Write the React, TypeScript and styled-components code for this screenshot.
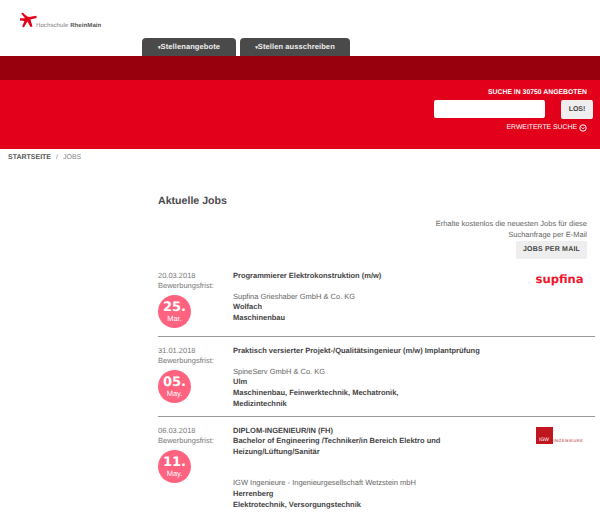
import React from 'react';
import styled, { createGlobalStyle } from 'styled-components';

const GlobalStyle = createGlobalStyle`
  html, body {
    margin: 0;
    padding: 0;
    background: #fff;
    overflow: hidden;
  }
  body {
    font-family: "Liberation Sans", Arial, sans-serif;
    color: #4a4a4a;
    text-rendering: geometricPrecision;
  }
`;

const Page = styled.div`
  width: 600px;
  height: 512px;
  overflow: hidden;
`;

const Header = styled.div`
  height: 56px;
  display: flex;
  flex-direction: column;
  justify-content: space-between;
`;

const LogoRow = styled.div`
  display: flex;
  align-items: flex-start;
  padding: 12px 0 0 20px;
`;

const LogoText = styled.span`
  font-size: 6px;
  color: #777;
  margin: 10px 0 0 -1px;
  line-height: 8px;
  letter-spacing: 0.1px;

  b {
    color: #555;
    font-weight: 700;
  }
`;

const Tabs = styled.div`
  display: flex;
  gap: 4px;
  padding-left: 142px;
`;

const Tab = styled.div<{ $width: number }>`
  width: ${({ $width }) => $width}px;
  height: 18px;
  background: #4a4a4a;
  border-radius: 4px 4px 0 0;
  color: #eee;
  font-size: 7.5px;
  font-weight: 700;
  line-height: 17px;
  text-align: center;
  letter-spacing: 0.1px;
`;

const TabArrow = styled.span`
  font-size: 5px;
`;

const DarkBand = styled.div`
  height: 24px;
  background: #99000d;
`;

const SearchBand = styled.div`
  height: 69px;
  background: #e2001a;
  display: flex;
  flex-direction: column;
  align-items: flex-end;
  padding: 8px 13px 0 0;
  box-sizing: border-box;
`;

const SearchTitle = styled.div`
  font-size: 6.85px;
  font-weight: 700;
  line-height: 9px;
  color: #fff;
`;

const SearchRow = styled.div`
  display: flex;
  gap: 16px;
  margin: 3px -6px 0 0;
`;

const SearchInput = styled.div`
  width: 111px;
  height: 18px;
  background: #fff;
  border-radius: 2px;
`;

const SearchButton = styled.div`
  width: 32px;
  height: 19px;
  background: #eeeeee;
  border-radius: 2px;
  color: #444;
  font-size: 7px;
  font-weight: 700;
  line-height: 19px;
  text-align: center;
`;

const AdvancedLink = styled.div`
  display: flex;
  align-items: center;
  gap: 2px;
  margin-top: 4px;
  font-size: 6.85px;
  line-height: 10px;
  color: #fff;
`;

const Breadcrumb = styled.div`
  padding: 4px 0 0 8px;
  font-size: 7px;
  line-height: 10px;
  color: #888;

  b {
    color: #555;
  }
`;

const Separator = styled.span`
  margin: 0 5px;
`;

const Main = styled.div`
  padding: 31px 5px 0 158px;
`;

const Title = styled.h1`
  margin: 0;
  font-size: 10.6px;
  line-height: 14px;
  font-weight: 700;
  color: #4a4a4a;
`;

const Alert = styled.div`
  display: flex;
  flex-direction: column;
  align-items: flex-end;
  margin: 11px 8px 3px 0;
  font-size: 7.5px;
  line-height: 10.6px;
  color: #666;
  text-align: right;
`;

const MailButton = styled.div`
  width: 71px;
  height: 18px;
  margin-top: 1px;
  background: #eeeeee;
  border-radius: 2px;
  color: #444;
  font-size: 7px;
  font-weight: 700;
  line-height: 18px;
  text-align: center;
  letter-spacing: 0.2px;
`;

const JobRow = styled.div<{ $height: number; $divider?: boolean }>`
  display: flex;
  height: ${({ $height }) => $height}px;
  box-sizing: border-box;
  padding-top: 8.5px;
  border-bottom: ${({ $divider }) => ($divider ? '1px solid #999' : 'none')};
`;

const DateColumn = styled.div`
  width: 75px;
  flex-shrink: 0;
  font-size: 7.5px;
  line-height: 10.6px;
  color: #777;
`;

const DateBadge = styled.div`
  width: 33px;
  height: 33px;
  margin-top: 3.5px;
  border-radius: 50%;
  background: #ff637f;
  color: #fff;
  display: flex;
  flex-direction: column;
  align-items: center;
  justify-content: center;
`;

const BadgeDay = styled.span`
  font-family: "DejaVu Sans", sans-serif;
  font-size: 13px;
  line-height: 13px;
  font-weight: 700;
`;

const BadgeMonth = styled.span`
  font-size: 7.5px;
  line-height: 9px;
`;

const JobBody = styled.div`
  flex: 1;
  min-width: 0;
  font-size: 7.5px;
  line-height: 10.6px;
  color: #666;
`;

const JobTitle = styled.div<{ $gap: number }>`
  font-weight: 700;
  color: #444;
  margin-bottom: ${({ $gap }) => $gap}px;
`;

const Strong = styled.div`
  font-weight: 700;
  color: #444;
`;

const LogoColumn = styled.div`
  width: 66px;
  flex-shrink: 0;
`;

const SupfinaLogo = styled.div`
  margin: 1px 0 0 6.5px;
  font-family: "DejaVu Sans", sans-serif;
  font-size: 11.6px;
  line-height: 14px;
  font-weight: 700;
  color: #f0142d;
`;

const IgwLogo = styled.div`
  display: flex;
  align-items: flex-end;
  gap: 1px;
  margin: 1.5px 0 0 6.5px;
`;

const IgwMark = styled.div`
  width: 17px;
  height: 17px;
  display: flex;
  align-items: flex-end;
  justify-content: center;
  background: #c0161f;
  color: #fff;
  font-size: 5px;
  line-height: 7px;
`;

const IgwName = styled.span`
  font-size: 4px;
  line-height: 6px;
  color: #b5121b;
  letter-spacing: 0.5px;
`;

const CircleIcon = () => (
  <svg width="8" height="8" viewBox="0 0 8 8" fill="none" stroke="#fff">
    <circle cx="4" cy="4" r="3.2" strokeWidth="1" />
    <path d="M2.6 3.4 4 4.8l1.4-1.4" strokeWidth="1" />
  </svg>
);

const Star = () => (
  <svg width="17" height="16" viewBox="0 0 17 16" fill="#e2001a">
    <path d="M2.5 0.5 7 4.2 9 5 16.5 3.8 16.5 6 10.5 7.6 12.5 14.5 10.5 15 7.5 9.5 3.8 15.5 2.2 14.5 4.4 9 0 8.6 0 6.2 5 6.2 1.2 1.6Z" />
  </svg>
);

const jobs = [
  {
    date: '20.03.2018',
    day: '25.',
    month: 'Mar.',
    title: ['Programmierer Elektrokonstruktion (m/w)'],
    gap: 10.6,
    company: 'Supfina Grieshaber GmbH & Co. KG',
    city: 'Wolfach',
    field: ['Maschinenbau'],
    logo: 'supfina',
    height: 75,
  },
  {
    date: '31.01.2018',
    day: '05.',
    month: 'May.',
    title: ['Praktisch versierter Projekt-/Qualitätsingenieur (m/w) Implantprüfung'],
    gap: 10.6,
    company: 'SpineServ GmbH & Co. KG',
    city: 'Ulm',
    field: ['Maschinenbau, Feinwerktechnik, Mechatronik,', 'Medizintechnik'],
    logo: '',
    height: 80,
  },
  {
    date: '06.03.2018',
    day: '11.',
    month: 'May.',
    title: [
      'DIPLOM-INGENIEUR/IN (FH)',
      'Bachelor of Engineering /Techniker/in Bereich Elektro und',
      'Heizung/Lüftung/Sanitär',
    ],
    gap: 21,
    company: 'IGW Ingenieure - Ingenieurgesellschaft Wetzstein mbH',
    city: 'Herrenberg',
    field: ['Elektrotechnik, Versorgungstechnik'],
    logo: 'igw',
    height: 96,
  },
];

export default function App() {
  return (
    <Page>
      <GlobalStyle />
      <Header>
        <LogoRow>
          <Star />
          <LogoText>
            Hochschule <b>RheinMain</b>
          </LogoText>
        </LogoRow>
        <Tabs>
          <Tab $width={94}>
            <TabArrow>▾</TabArrow>Stellenangebote
          </Tab>
          <Tab $width={110}>
            <TabArrow>▾</TabArrow>Stellen ausschreiben
          </Tab>
        </Tabs>
      </Header>
      <DarkBand />
      <SearchBand>
        <SearchTitle>SUCHE IN 30750 ANGEBOTEN</SearchTitle>
        <SearchRow>
          <SearchInput />
          <SearchButton>LOS!</SearchButton>
        </SearchRow>
        <AdvancedLink>
          ERWEITERTE SUCHE <CircleIcon />
        </AdvancedLink>
      </SearchBand>
      <Breadcrumb>
        <b>STARTSEITE</b>
        <Separator>/</Separator>JOBS
      </Breadcrumb>
      <Main>
        <Title>Aktuelle Jobs</Title>
        <Alert>
          <div>Erhalte kostenlos die neuesten Jobs für diese</div>
          <div>Suchanfrage per E-Mail</div>
          <MailButton>JOBS PER MAIL</MailButton>
        </Alert>
        {jobs.map((job, index) => (
          <JobRow key={job.date} $height={job.height} $divider={index < jobs.length - 1}>
            <DateColumn>
              <div>{job.date}</div>
              <div>Bewerbungsfrist:</div>
              <DateBadge>
                <BadgeDay>{job.day}</BadgeDay>
                <BadgeMonth>{job.month}</BadgeMonth>
              </DateBadge>
            </DateColumn>
            <JobBody>
              <JobTitle $gap={job.gap}>
                {job.title.map((line) => (
                  <div key={line}>{line}</div>
                ))}
              </JobTitle>
              <div>{job.company}</div>
              <Strong>{job.city}</Strong>
              <Strong>
                {job.field.map((line) => (
                  <div key={line}>{line}</div>
                ))}
              </Strong>
            </JobBody>
            <LogoColumn>
              {job.logo === 'supfina' && <SupfinaLogo>supfina</SupfinaLogo>}
              {job.logo === 'igw' && (
                <IgwLogo>
                  <IgwMark>IGW</IgwMark>
                  <IgwName>INGENIEURE</IgwName>
                </IgwLogo>
              )}
            </LogoColumn>
          </JobRow>
        ))}
      </Main>
    </Page>
  );
}
